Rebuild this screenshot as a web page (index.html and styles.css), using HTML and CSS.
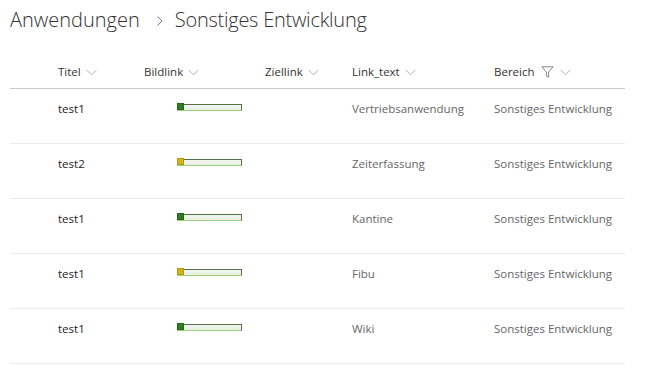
FILE: index.html
```html
<!DOCTYPE html>
<html lang="de">
<head>
<meta charset="utf-8">
<title>Anwendungen</title>
<link rel="stylesheet" href="styles.css">
</head>
<body>
<div class="page">
  <h1 class="crumbs">
    <span>Anwendungen</span>
    <svg class="crumb-sep" width="8" height="12" viewBox="0 0 8 12"><polyline points="1.5,1.5 6,6 1.5,10.5" fill="none" stroke="#777" stroke-width="1"/></svg>
    <span class="crumb-last">Sonstiges Entwicklung</span>
  </h1>
  <div class="list">
    <div class="row head">
      <div class="cell"></div>
      <div class="cell">Titel <svg class="chev" width="11" height="7" viewBox="0 0 11 7"><polyline points="0.5,0.8 5.5,5.8 10.5,0.8" fill="none" stroke="#b4b4b4" stroke-width="1"/></svg></div>
      <div class="cell">Bildlink <svg class="chev" width="11" height="7" viewBox="0 0 11 7"><polyline points="0.5,0.8 5.5,5.8 10.5,0.8" fill="none" stroke="#b4b4b4" stroke-width="1"/></svg></div>
      <div class="cell">Ziellink <svg class="chev" width="11" height="7" viewBox="0 0 11 7"><polyline points="0.5,0.8 5.5,5.8 10.5,0.8" fill="none" stroke="#b4b4b4" stroke-width="1"/></svg></div>
      <div class="cell">Link_text <svg class="chev" width="11" height="7" viewBox="0 0 11 7"><polyline points="0.5,0.8 5.5,5.8 10.5,0.8" fill="none" stroke="#b4b4b4" stroke-width="1"/></svg></div>
      <div class="cell">Bereich <svg class="filter" width="13" height="12" viewBox="0 0 13 12"><path d="M0.8,0.8 H12.2 L7.6,6 V11.2 L5.4,10 V6 Z" fill="none" stroke="#888" stroke-width="1"/></svg><svg class="chev" width="11" height="7" viewBox="0 0 11 7"><polyline points="0.5,0.8 5.5,5.8 10.5,0.8" fill="none" stroke="#b4b4b4" stroke-width="1"/></svg></div>
    </div>
    <div class="row">
      <div class="cell"></div>
      <div class="cell title">test1</div>
      <div class="cell"><span class="bar"><span class="dot green"></span></span></div>
      <div class="cell"></div>
      <div class="cell muted">Vertriebsanwendung</div>
      <div class="cell muted">Sonstiges Entwicklung</div>
    </div>
    <div class="row">
      <div class="cell"></div>
      <div class="cell title">test2</div>
      <div class="cell"><span class="bar"><span class="dot yellow"></span></span></div>
      <div class="cell"></div>
      <div class="cell muted">Zeiterfassung</div>
      <div class="cell muted">Sonstiges Entwicklung</div>
    </div>
    <div class="row">
      <div class="cell"></div>
      <div class="cell title">test1</div>
      <div class="cell"><span class="bar"><span class="dot green"></span></span></div>
      <div class="cell"></div>
      <div class="cell muted">Kantine</div>
      <div class="cell muted">Sonstiges Entwicklung</div>
    </div>
    <div class="row">
      <div class="cell"></div>
      <div class="cell title">test1</div>
      <div class="cell"><span class="bar"><span class="dot yellow"></span></span></div>
      <div class="cell"></div>
      <div class="cell muted">Fibu</div>
      <div class="cell muted">Sonstiges Entwicklung</div>
    </div>
    <div class="row">
      <div class="cell"></div>
      <div class="cell title">test1</div>
      <div class="cell"><span class="bar"><span class="dot green"></span></span></div>
      <div class="cell"></div>
      <div class="cell muted">Wiki</div>
      <div class="cell muted">Sonstiges Entwicklung</div>
    </div>
  </div>
</div>
</body>
</html>
```
FILE: styles.css
```css
html, body {
  margin: 0;
  padding: 0;
  background: #fff;
}
body {
  font-family: "Open Sans", "Noto Sans", sans-serif;
  color: #333;
}
.page {
  padding: 6px 0 0 10px;
  width: 615px;
}
.crumbs {
  margin: 0;
  font-size: 20px;
  font-weight: 300;
  line-height: 28px;
  color: #333;
  display: flex;
  align-items: center;
  letter-spacing: 0;
}
.crumb-last {
  letter-spacing: -0.25px;
}
.crumb-sep {
  margin: 2px 11px 0 16px;
}
.list {
  margin-top: 21px;
}
.row {
  display: grid;
  grid-template-columns: 48px 86px 121px 87px 142px 1fr;
  height: 54px;
  align-items: start;
  border-bottom: 1px solid #eaeaea;
  font-size: 11.5px;
}
.row.head {
  height: 33px;
  border-bottom: 1px solid #c8c8c8;
  align-items: center;
  color: #333;
}
.cell {
  display: flex;
  align-items: center;
  white-space: nowrap;
}
.row:not(.head) .cell {
  height: 38px;
}
.chev {
  margin-left: 5px;
  margin-top: 1px;
}
.filter {
  margin-left: 6px;
  margin-right: 1px;
}
.title {
  color: #222;
}
.muted {
  color: #666;
}
.bar {
  display: block;
  position: relative;
  margin-left: 33px;
  margin-top: -1px;
  width: 63px;
  height: 5px;
  background: linear-gradient(#f4f7f1, #e6ede1);
  border-top: 1px solid #56704a;
  border-right: 1px solid #56704a;
  border-bottom: 1px solid #9ed27a;
  border-left: 1px solid #9ed27a;
}
.dot {
  position: absolute;
  left: -1px;
  top: -2px;
  width: 5px;
  height: 5px;
}
.dot.green {
  background: #2f7d1f;
  border: 1px solid #24661a;
}
.dot.yellow {
  background: #d4b21c;
  border: 1px solid #b89812;
}
```
